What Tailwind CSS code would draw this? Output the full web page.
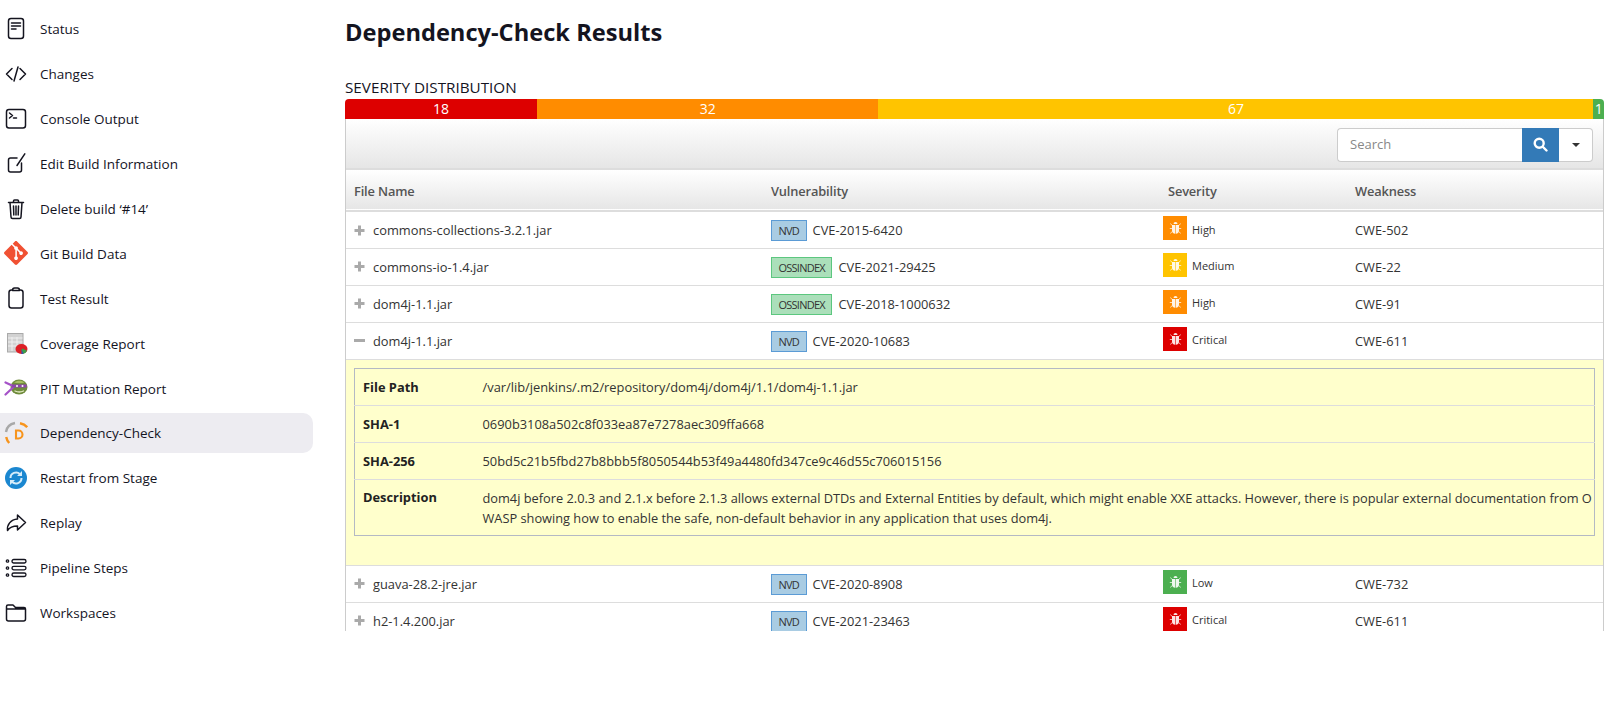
<!DOCTYPE html>
<html lang="en">
<head>
  <meta charset="UTF-8" />
  <title>Dependency-Check Results</title>
  <script src="https://cdn.jsdelivr.net/npm/@tailwindcss/browser@4"></script>
</head>
<body class="bg-white font-['Open_Sans',sans-serif] text-[#333] overflow-hidden">
  <svg class="hidden">
    <symbol id="bug" viewBox="0 0 13 14">
      <path fill="#fff" fill-opacity="0.9" d="M4.500 3a2 2 0 0 1 4 0zM3 4h3.200v8.800A3.500 3.500 0 0 1 3 9.300zM6.800 4H10v5.300a3.500 3.500 0 0 1-3.200 3.500z"/>
      <path stroke="#fff" stroke-opacity="0.7" stroke-width="1" fill="none" d="M1.500 2.500L3 4.500M11.500 2.500L10 4.500M.8 7.500H3M12.200 7.500H10M1.500 12.500L3 10.500M11.500 12.500L10 10.500"/>
    </symbol>
    <symbol id="plus" viewBox="0 0 11 11"><path fill="#aaa" d="M4 .5h3V4h3.500v3H7v3.500H4V7H.5V4H4z"/></symbol>
  </svg>

  <div class="flex h-[631px] overflow-hidden">
    <!-- side panel -->
    <aside class="w-[345px] shrink-0 pt-[9px] pr-[32px]">
      <nav class="flex flex-col gap-[4.900px] text-[13.500px] font-medium text-[#14141f]">
        <a class="flex items-center h-10 pl-1 gap-3">
          <svg class="w-6 h-6 shrink-0" viewBox="0 0 24 24" fill="none" stroke="#14141f" stroke-width="1.500" stroke-linecap="round"><rect x="4.500" y="1.500" width="15" height="20" rx="2.500"/><path d="M7.500 6h9M7.500 9h9M7.500 12h4.500"/></svg>
          <span class="mt-[1px]">Status</span>
        </a>
        <a class="flex items-center h-10 pl-1 gap-3">
          <svg class="w-6 h-6 shrink-0" viewBox="0 0 24 24" fill="none" stroke="#14141f" stroke-width="1.500" stroke-linecap="round" stroke-linejoin="round"><path d="M8 6.500L2.500 12 8 17.500M16 6.500l5.500 5.500-5.500 5.500M14 5l-4 14"/></svg>
          <span class="mt-[1px]">Changes</span>
        </a>
        <a class="flex items-center h-10 pl-1 gap-3">
          <svg class="w-6 h-6 shrink-0" viewBox="0 0 24 24" fill="none" stroke="#14141f" stroke-width="1.500" stroke-linecap="round" stroke-linejoin="round"><rect x="2.500" y="2.500" width="19" height="18.500" rx="2.500"/><path d="M5.500 6l3 2.500-3 2.500M9.500 11h3"/></svg>
          <span class="mt-[1px]">Console Output</span>
        </a>
        <a class="flex items-center h-10 pl-1 gap-3">
          <svg class="w-6 h-6 shrink-0" viewBox="0 0 24 24" fill="none" stroke="#14141f" stroke-width="1.500" stroke-linecap="round" stroke-linejoin="round"><path d="M13 6H6.500a2 2 0 0 0-2 2v10a2 2 0 0 0 2 2h9a2 2 0 0 0 2-2v-7M20.800 1.800L13 13.500"/></svg>
          <span class="mt-[1px]">Edit Build Information</span>
        </a>
        <a class="flex items-center h-10 pl-1 gap-3">
          <svg class="w-6 h-6 shrink-0" viewBox="0 0 24 24" fill="none" stroke="#14141f" stroke-width="1.500" stroke-linecap="round" stroke-linejoin="round"><path d="M4.500 5.500h15M6 5.500l1 14.500a1.500 1.500 0 0 0 1.500 1.500h7a1.500 1.500 0 0 0 1.500-1.500l1-14.500M9.500 5.500V4a1 1 0 0 1 1-1h3a1 1 0 0 1 1 1v1.500M9.500 9l.3 9M12 9v9M14.500 9l-.3 9"/></svg>
          <span class="mt-[1px]">Delete build ‘#14’</span>
        </a>
        <a class="flex items-center h-10 pl-1 gap-3">
          <svg class="w-6 h-6 shrink-0" viewBox="0 0 24 24"><path fill="#f05133" d="M23.546 10.930L13.067.452c-.604-.603-1.582-.603-2.188 0L8.708 2.627l2.760 2.760c.645-.215 1.379-.07 1.889.441.516.515.658 1.258.438 1.900l2.658 2.660c.645-.223 1.387-.078 1.900.435.721.72.721 1.884 0 2.604-.719.719-1.881.719-2.600 0-.539-.541-.674-1.337-.404-1.996L12.860 8.955v6.525c.176.086.342.203.488.348.713.721.713 1.883 0 2.600-.719.721-1.889.721-2.609 0-.719-.719-.719-1.879 0-2.598.182-.18.387-.316.605-.406V8.835c-.217-.091-.424-.222-.6-.401-.545-.545-.676-1.342-.396-2.009L7.636 3.700.45 10.881c-.6.605-.6 1.584 0 2.189l10.480 10.477c.604.604 1.582.604 2.186 0l10.430-10.430c.605-.603.605-1.582 0-2.187"/></svg>
          <span class="mt-[1px]">Git Build Data</span>
        </a>
        <a class="flex items-center h-10 pl-1 gap-3">
          <svg class="w-6 h-6 shrink-0" viewBox="0 0 24 24" fill="none" stroke="#14141f" stroke-width="1.500" stroke-linecap="round" stroke-linejoin="round"><path d="M8.500 4H7.500A2.500 2.500 0 0 0 5 6.500v13A2.500 2.500 0 0 0 7.500 22h9a2.500 2.500 0 0 0 2.500-2.500v-13A2.500 2.500 0 0 0 16.500 4h-1M8.500 4.500c0-1.500 1-2.500 2-2.500h3c1 0 2 1 2 2.500z"/></svg>
          <span class="mt-[1px]">Test Result</span>
        </a>
        <a class="flex items-center h-10 pl-1 gap-3">
          <svg class="w-6 h-6 shrink-0" viewBox="0 0 24 24"><rect x="3.500" y="2.500" width="15.500" height="18.500" fill="#d2d2d2" stroke="#aaa"/><path stroke="#f0f0f0" stroke-width="1" d="M4 7h14.500M4 11h14.500M4 15h14.500M8 6v14M13 6v14"/><ellipse cx="17.500" cy="18" rx="6" ry="5" fill="#dd2027"/><path fill="#3aa04a" d="M17.500 18.500l1-1 4.600 2.300a6 5 0 0 1-4.600 3.200z"/><path fill="#2f55b5" d="M17.500 18.500l2 4.200a6 5 0 0 1-2 .3z"/></svg>
          <span class="mt-[1px]">Coverage Report</span>
        </a>
        <a class="flex items-center h-10 pl-1 gap-3">
          <svg class="w-6 h-6 shrink-0" viewBox="0 0 24 24"><ellipse cx="15" cy="11" rx="8.500" ry="7.500" fill="#6f8b3c"/><path fill="#a9bf62" d="M10 6.500c3-2.500 8-2.500 10.500 0-3 1-7.500 1-10.500 0z"/><path stroke="#a552c8" stroke-width="2.200" stroke-linecap="round" fill="none" d="M1.500 6.500L9 10M1.500 18.500L9 11.500"/><path fill="#8e44ad" d="M8 8.500h14.500c.3 1 .3 2 0 3H8z"/><circle cx="13" cy="10" r="1" fill="#fff"/><circle cx="18.500" cy="10" r="1" fill="#fff"/><path stroke="#e4ecc4" stroke-width="1.300" stroke-linecap="round" fill="none" d="M11 15c2.500 1.200 6 1.200 8.500 0"/></svg>
          <span class="mt-[1px]">PIT Mutation Report</span>
        </a>
        <a class="flex items-center h-10 pl-1 gap-3 rounded-r-[10px] bg-[#edecf1]">
          <svg class="w-6 h-6 shrink-0" viewBox="0 0 24 24" fill="none" stroke-width="2.400"><path stroke="#a8a8a8" d="M2 11C2.600 6.500 6 3 11 2"/><path stroke="#f7941d" d="M16 2.200c3 .6 5.500 2 7.200 4M2.200 16c.4 2.200 1.400 4.200 3 6"/><path stroke="#f7941d" stroke-width="2.100" d="M12 9.500h2.500a4 4 0 0 1 0 8H12z"/></svg>
          <span class="mt-[1px]">Dependency-Check</span>
        </a>
        <a class="flex items-center h-10 pl-1 gap-3">
          <svg class="w-6 h-6 shrink-0" viewBox="0 0 24 24"><circle cx="12" cy="12" r="11" fill="#1b87d0"/><path fill="none" stroke="#d5ecfa" stroke-width="2" d="M6.500 12a5.500 5.500 0 0 1 9.500-3.800M17.500 12A5.500 5.500 0 0 1 8 15.800"/><path fill="#d5ecfa" d="M18 5v5h-5zM6 19v-5h5z"/></svg>
          <span class="mt-[1px]">Restart from Stage</span>
        </a>
        <a class="flex items-center h-10 pl-1 gap-3">
          <svg class="w-6 h-6 shrink-0" viewBox="0 0 24 24" fill="none" stroke="#14141f" stroke-width="1.500" stroke-linejoin="round"><path d="M13.500 8V4l8 7.500-8 7.500v-4c-5 0-8 1.500-10 4.500-.7-5.500 3-11 10-11.500z"/></svg>
          <span class="mt-[1px]">Replay</span>
        </a>
        <a class="flex items-center h-10 pl-1 gap-3">
          <svg class="w-6 h-6 shrink-0" viewBox="0 0 24 24" fill="none" stroke="#14141f" stroke-width="1.300"><rect x="8" y="3.500" width="14" height="3.500" rx="1.750"/><rect x="8" y="10.300" width="14" height="3.500" rx="1.750"/><rect x="8" y="17" width="14" height="3.500" rx="1.750"/><circle cx="3.500" cy="5" r="1.200"/><circle cx="3.500" cy="12" r="1.200"/><circle cx="3.500" cy="19" r="1.200"/></svg>
          <span class="mt-[1px]">Pipeline Steps</span>
        </a>
        <a class="flex items-center h-10 pl-1 gap-3">
          <svg class="w-6 h-6 shrink-0" viewBox="0 0 24 24" fill="none" stroke="#14141f" stroke-width="1.500" stroke-linejoin="round"><path d="M2.500 8V5.500A1.500 1.500 0 0 1 4 4h5l2.500 2.500H20A1.500 1.500 0 0 1 21.500 8v10a2 2 0 0 1-2 2h-15a2 2 0 0 1-2-2zM2.500 8h19"/></svg>
          <span class="mt-[1px]">Workspaces</span>
        </a>
      </nav>
    </aside>

    <main class="w-[1259px] shrink-0">
      <h1 class="h-[78px] pt-[15px] text-[23.650px] leading-[34px] font-bold text-[#14141f]">Dependency-Check Results</h1>
      <div class="h-[21px] text-[15.250px] leading-[19px] text-[#14141f]">SEVERITY DISTRIBUTION</div>

      <!-- severity bar -->
      <div class="flex h-5 text-[14px] leading-5 text-white text-center font-medium rounded-t-[4px] overflow-hidden">
        <div class="flex-[18] bg-[#dd0000]">18</div>
        <div class="flex-[32] bg-[#ff8c00]">32</div>
        <div class="flex-[67] bg-[#ffc400]">67</div>
        <div class="flex-[1] bg-[#4caf50]">1</div>
      </div>

      <div class="border-x border-[#ccc]">
        <div class="flex justify-end items-center h-[51px] pt-[2px] pr-[10px] bg-gradient-to-b from-white to-[#e6e6e6] border-b-2 border-[#ddd]">
          <div class="flex h-[34px] text-[13px]">
            <input class="w-[185px] px-3 border border-r-0 border-[#ccc] rounded-l-[4px] bg-white outline-none placeholder:text-[#888]" placeholder="Search" />
            <button class="flex items-center justify-center w-[37px] bg-[#337ab7]">
              <svg class="w-[15px] h-[15px]" viewBox="0 0 15 15" fill="none" stroke="#fff" stroke-width="2.400" stroke-linecap="round"><circle cx="6.200" cy="6.200" r="4.500"/><path d="M10 10l3.500 3.500"/></svg>
            </button>
            <button class="flex items-center justify-center w-[34px] bg-white border border-l-0 border-[#ccc] rounded-r-[4px]">
              <span class="w-0 h-0 border-x-[4px] border-x-transparent border-t-[4px] border-t-[#333]"></span>
            </button>
          </div>
        </div>

        <table class="w-full table-fixed border-collapse text-[12.850px]">
          <colgroup>
            <col class="w-[417px]" />
            <col class="w-[397px]" />
            <col class="w-[187px]" />
            <col />
          </colgroup>
          <thead>
            <tr class="h-[41px] bg-gradient-to-b from-white to-[#e6e6e6] border-b-2 border-[#ddd] text-left text-[#555] tracking-[-0.15px]">
              <th class="px-2 pt-[3px] font-semibold">File Name</th>
              <th class="px-2 pt-[3px] font-semibold">Vulnerability</th>
              <th class="px-2 pt-[3px] font-semibold">Severity</th>
              <th class="px-2 pt-[3px] font-semibold">Weakness</th>
            </tr>
          </thead>
          <tbody>
            <tr class="h-[37px] border-b border-[#ddd]">
              <td class="px-2 pt-[2px]"><div class="flex items-center gap-2"><svg class="w-[11px] h-[11px] mb-[1px]"><use href="#plus"/></svg><span>commons-collections-3.2.1.jar</span></div></td>
              <td class="px-2 pt-[2px]"><div class="flex items-center gap-[6px]"><span class="px-[6.500px] h-[21px] leading-[20px] text-[11px] tracking-[-0.75px] bg-[#a9cce3] border border-[#5b9bd5]">NVD</span><span>CVE-2015-6420</span></div></td>
              <td class="pl-[3px]"><div class="flex items-center gap-[5px]"><span class="flex items-center justify-center w-6 h-6 mb-[4px] bg-[#ff8c00]"><svg class="w-[13px] h-[14px]"><use href="#bug"/></svg></span><span class="text-[11px]">High</span></div></td>
              <td class="px-2 pt-[2px]">CWE-502</td>
            </tr>
            <tr class="h-[37px] border-b border-[#ddd]">
              <td class="px-2 pt-[2px]"><div class="flex items-center gap-2"><svg class="w-[11px] h-[11px] mb-[1px]"><use href="#plus"/></svg><span>commons-io-1.4.jar</span></div></td>
              <td class="px-2 pt-[2px]"><div class="flex items-center gap-[6px]"><span class="px-[6.500px] h-[21px] leading-[20px] text-[11px] tracking-[-0.75px] bg-[#abdfba] border border-[#5cc77f]">OSSINDEX</span><span>CVE-2021-29425</span></div></td>
              <td class="pl-[3px]"><div class="flex items-center gap-[5px]"><span class="flex items-center justify-center w-6 h-6 mb-[4px] bg-[#ffc400]"><svg class="w-[13px] h-[14px]"><use href="#bug"/></svg></span><span class="text-[11px]">Medium</span></div></td>
              <td class="px-2 pt-[2px]">CWE-22</td>
            </tr>
            <tr class="h-[37px] border-b border-[#ddd]">
              <td class="px-2 pt-[2px]"><div class="flex items-center gap-2"><svg class="w-[11px] h-[11px] mb-[1px]"><use href="#plus"/></svg><span>dom4j-1.1.jar</span></div></td>
              <td class="px-2 pt-[2px]"><div class="flex items-center gap-[6px]"><span class="px-[6.500px] h-[21px] leading-[20px] text-[11px] tracking-[-0.75px] bg-[#abdfba] border border-[#5cc77f]">OSSINDEX</span><span>CVE-2018-1000632</span></div></td>
              <td class="pl-[3px]"><div class="flex items-center gap-[5px]"><span class="flex items-center justify-center w-6 h-6 mb-[4px] bg-[#ff8c00]"><svg class="w-[13px] h-[14px]"><use href="#bug"/></svg></span><span class="text-[11px]">High</span></div></td>
              <td class="px-2 pt-[2px]">CWE-91</td>
            </tr>
            <tr class="h-[37px] border-b border-[#ddd]">
              <td class="px-2 pt-[2px]"><div class="flex items-center gap-2"><span class="w-[11px] h-[3px] mb-[1px] bg-[#aaa]"></span><span>dom4j-1.1.jar</span></div></td>
              <td class="px-2 pt-[2px]"><div class="flex items-center gap-[6px]"><span class="px-[6.500px] h-[21px] leading-[20px] text-[11px] tracking-[-0.75px] bg-[#a9cce3] border border-[#5b9bd5]">NVD</span><span>CVE-2020-10683</span></div></td>
              <td class="pl-[3px]"><div class="flex items-center gap-[5px]"><span class="flex items-center justify-center w-6 h-6 mb-[4px] bg-[#dd0000]"><svg class="w-[13px] h-[14px]"><use href="#bug"/></svg></span><span class="text-[11px]">Critical</span></div></td>
              <td class="px-2 pt-[2px]">CWE-611</td>
            </tr>

            <!-- expanded row -->
            <tr class="border-b border-[#ddd] bg-[#ffffcc]">
              <td colspan="4" class="px-2 pt-2 pb-[29px]">
                <table class="w-full table-fixed border-collapse border border-[#b4b9c4]">
                  <colgroup><col class="w-[128px]" /><col /></colgroup>
                  <tbody>
                    <tr class="h-[37px] border-b border-[#ddd]"><th class="pl-2 pt-[2px] text-left font-bold text-[#222]">File Path</th><td class="pt-[2px]">/var/lib/jenkins/.m2/repository/dom4j/dom4j/1.1/dom4j-1.1.jar</td></tr>
                    <tr class="h-[37px] border-b border-[#ddd]"><th class="pl-2 pt-[2px] text-left font-bold text-[#222]">SHA-1</th><td class="pt-[2px]">0690b3108a502c8f033ea87e7278aec309ffa668</td></tr>
                    <tr class="h-[37px] border-b border-[#ddd]"><th class="pl-2 pt-[2px] text-left font-bold text-[#222]">SHA-256</th><td class="pt-[2px]">50bd5c21b5fbd27b8bbb5f8050544b53f49a4480fd347ce9c46d55c706015156</td></tr>
                    <tr class="h-[56px]"><th class="pl-2 pt-[8px] align-top text-left font-bold text-[#222]">Description</th><td class="leading-[20px] pt-[8px] pb-[7px] whitespace-nowrap text-[12.800px]">dom4j before 2.0.3 and 2.1.x before 2.1.3 allows external DTDs and External Entities by default, which might enable XXE attacks. However, there is popular external documentation from O<br />WASP showing how to enable the safe, non-default behavior in any application that uses dom4j.</td></tr>
                  </tbody>
                </table>
              </td>
            </tr>

            <tr class="h-[37px] border-b border-[#ddd]">
              <td class="px-2 pt-[2px]"><div class="flex items-center gap-2"><svg class="w-[11px] h-[11px] mb-[1px]"><use href="#plus"/></svg><span>guava-28.2-jre.jar</span></div></td>
              <td class="px-2 pt-[2px]"><div class="flex items-center gap-[6px]"><span class="px-[6.500px] h-[21px] leading-[20px] text-[11px] tracking-[-0.75px] bg-[#a9cce3] border border-[#5b9bd5]">NVD</span><span>CVE-2020-8908</span></div></td>
              <td class="pl-[3px]"><div class="flex items-center gap-[5px]"><span class="flex items-center justify-center w-6 h-6 mb-[4px] bg-[#4caf50]"><svg class="w-[13px] h-[14px]"><use href="#bug"/></svg></span><span class="text-[11px]">Low</span></div></td>
              <td class="px-2 pt-[2px]">CWE-732</td>
            </tr>
            <tr class="h-[37px] border-b border-[#ddd]">
              <td class="px-2 pt-[2px]"><div class="flex items-center gap-2"><svg class="w-[11px] h-[11px] mb-[1px]"><use href="#plus"/></svg><span>h2-1.4.200.jar</span></div></td>
              <td class="px-2 pt-[2px]"><div class="flex items-center gap-[6px]"><span class="px-[6.500px] h-[21px] leading-[20px] text-[11px] tracking-[-0.75px] bg-[#a9cce3] border border-[#5b9bd5]">NVD</span><span>CVE-2021-23463</span></div></td>
              <td class="pl-[3px]"><div class="flex items-center gap-[5px]"><span class="flex items-center justify-center w-6 h-6 mb-[4px] bg-[#dd0000]"><svg class="w-[13px] h-[14px]"><use href="#bug"/></svg></span><span class="text-[11px]">Critical</span></div></td>
              <td class="px-2 pt-[2px]">CWE-611</td>
            </tr>
          </tbody>
        </table>
      </div>
    </main>
  </div>
</body>
</html>
